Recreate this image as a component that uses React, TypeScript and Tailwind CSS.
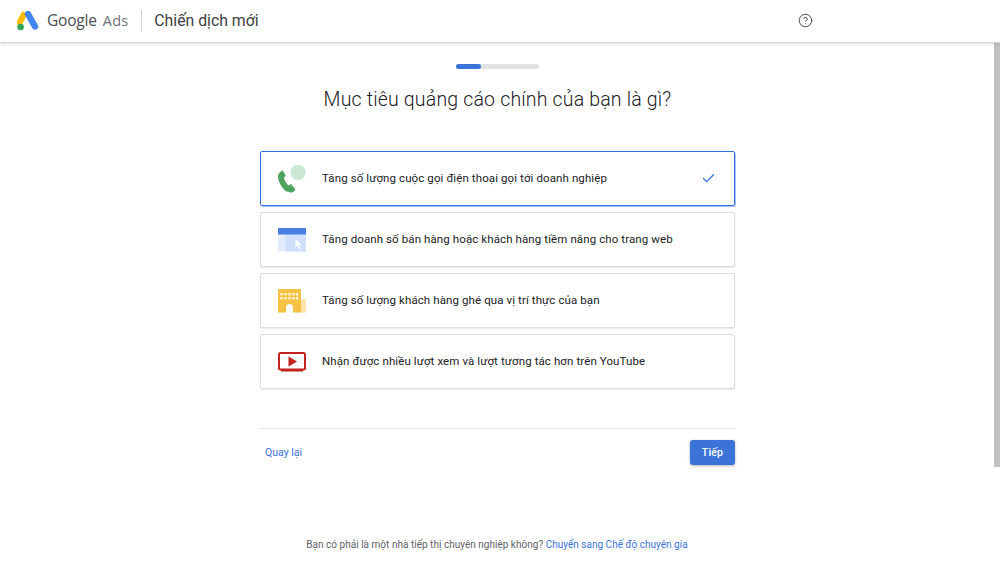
import React from 'react'
import { Check, CircleHelp } from 'lucide-react'

const GoogleAdsLogo = () => (
  <svg width="22" height="20" viewBox="0 0 22 20" className="shrink-0">
    <path d="M8 1.5 1.2 14" stroke="#fbbc04" strokeWidth="6" strokeLinecap="butt" fill="none" />
    <path d="M11 3 18 15.5" stroke="#4285f4" strokeWidth="6.4" strokeLinecap="round" fill="none" />
    <circle cx="3.6" cy="16" r="3.3" fill="#34a853" />
  </svg>
)

const PhoneIcon = () => (
  <svg width="28" height="28" viewBox="0 0 28 28">
    <circle cx="20" cy="7.5" r="7.7" fill="#cde7d6" />
    <path d="M14 19.8 9.2 27.3C5 25 .6 18.2 0 12.6c-.2-2 .3-3.2 1.500-4.500L4.500 5.600 7.800 11 5.800 13.100c.9 3 2.400 5.500 4.700 7.700L13 19.300Z" fill="#4da35f" transform="translate(0 -.3)" />
    <path d="M14.200 20.400 17.500 24.600 15.200 26.900C13.800 27.800 12 27.600 10.300 26.700L9 25.800 11 20.800Z" fill="#4da35f" />
  </svg>
)

const WebIcon = () => (
  <svg width="28" height="24" viewBox="0 0 28 24">
    <rect x="0" y="0" width="28" height="23.500" fill="#e3ecfc" />
    <rect x="7" y="6" width="21" height="17.500" fill="#d0dffa" />
    <rect x="0" y="0" width="28" height="6.500" fill="#4b7fe3" />
    <path d="M17.500 11 23.500 16.800 20.800 16.900 22.300 20.500 20.800 21.200 19.300 17.600 17.500 19.300Z" fill="#fff" />
  </svg>
)

const StoreIcon = () => (
  <svg width="28" height="24" viewBox="0 0 28 24">
    <rect x="22" y="10" width="6" height="13.500" fill="#fde3a7" />
    <path d="M0 0h23v23.500h-8v-5a3.500 3.500 0 0 0-7 0v5H0Z" fill="#f6c244" />
    <g fill="#fff6de">
      {[3.500, 7.500, 11.500, 15.500, 19].map((x) => (
        <React.Fragment key={x}>
          <rect x={x - 1.200} y="4" width="2.400" height="2.400" />
          <rect x={x - 1.200} y="8" width="2.400" height="2.400" />
        </React.Fragment>
      ))}
    </g>
  </svg>
)

const VideoIcon = () => (
  <svg width="28" height="20" viewBox="0 0 28 20">
    <rect x="1" y="1" width="26" height="16.500" rx="1.500" fill="#fff" stroke="#c5221f" strokeWidth="2" />
    <path d="M10.500 4.500 19 9.500 10.500 14.500Z" fill="#c5221f" />
    <rect x="3" y="18" width="22" height="1.500" fill="#c5221f" />
  </svg>
)

const goals = [
  { id: 'calls', label: 'Tăng số lượng cuộc gọi điện thoại gọi tới doanh nghiệp', icon: <PhoneIcon />, selected: true },
  { id: 'web', label: 'Tăng doanh số bán hàng hoặc khách hàng tiềm năng cho trang web', icon: <WebIcon /> },
  { id: 'visits', label: 'Tăng số lượng khách hàng ghé qua vị trí thực của bạn', icon: <StoreIcon /> },
  { id: 'youtube', label: 'Nhận được nhiều lượt xem và lượt tương tác hơn trên YouTube', icon: <VideoIcon /> },
]

export default function App() {
  return (
    <div className="relative h-[568px] w-[1000px] overflow-hidden bg-white font-['Roboto',sans-serif] text-[#202124]">
      <header className="relative z-10 flex h-[43px] items-center border-b border-[#d5d6d8] bg-white pb-[1px] pl-[17px] shadow-[0_1px_3px_rgba(60,64,67,0.18)]">
        <GoogleAdsLogo />
        <span className="ml-[8px] font-['Open_Sans',sans-serif] text-[15.500px] tracking-[-0.2px] text-[#4b4f54]">Google</span>
        <span className="ml-[6px] font-['Open_Sans',sans-serif] text-[14.500px] tracking-[0.2px] text-[#6f7377]">Ads</span>
        <div className="ml-[13px] h-[22px] w-px bg-[#d0d2d4]" />
        <span className="ml-[12px] text-[15.800px] text-[#3c4043]">Chiến dịch mới</span>
        <CircleHelp className="ml-[539px] h-[15px] w-[15px] text-[#3c4043]" strokeWidth={1.500} />
      </header>

      <div className="absolute right-0 top-[43px] h-[424px] w-[6px] bg-[#c1c1c1]" />

      <main className="ml-[260px] flex w-[475px] flex-col">
        <div className="mx-auto mt-[21px] h-[5px] w-[83px] rounded-full bg-[#e0e1e3]">
          <div className="h-full w-[25px] rounded-full bg-[#3b73d9]" />
        </div>
        <h1 className="mt-[17px] text-center text-[19.500px] leading-[28px] font-light tracking-[0.18px] text-[#202124]">
          Mục tiêu quảng cáo chính của bạn là gì?
        </h1>

        <div className="mt-[37px] flex flex-col gap-[6px]">
          {goals.map((goal) => (
            <div
              key={goal.id}
              className={
                goal.selected
                  ? 'flex h-[55px] items-center rounded-[2px] border border-[#2f6ee0] pr-[18px] shadow-[1px_1px_0_rgba(47,110,224,0.4)]'
                  : 'flex h-[55px] items-center rounded-[2px] border border-[#dadce0] pr-[18px] shadow-[0_1px_1px_rgba(60,64,67,0.12)]'
              }
            >
              <div className="ml-[17px] flex w-[28px] shrink-0 justify-center">{goal.icon}</div>
              <span className="ml-[16px] flex-1 text-[11.500px] tracking-[0.1px] text-[#202124]">{goal.label}</span>
              {goal.selected && <Check className="h-[15px] w-[15px] text-[#2f6ee0]" strokeWidth={2} />}
            </div>
          ))}
        </div>

        <div className="mt-[39px] h-px bg-[#e6e7e9]" />
        <div className="mt-[11px] flex items-center justify-between">
          <a className="ml-[5px] text-[10.500px] tracking-[0px] text-[#3b73d9]">Quay lại</a>
          <button className="h-[25px] w-[45px] rounded-[3px] bg-[#3b73d9] text-[10.500px] font-medium tracking-[0.2px] text-white shadow-[0_1px_3px_rgba(60,64,67,0.4)]">
            Tiếp
          </button>
        </div>
      </main>

      <p className="mt-[72px] w-[994px] text-center text-[10px] tracking-[0.02px] text-[#5f6368]">
        Bạn có phải là một nhà tiếp thị chuyên nghiệp không?{' '}
        <a className="text-[#3b73d9]">Chuyển sang Chế độ chuyên gia</a>
      </p>
    </div>
  )
}
